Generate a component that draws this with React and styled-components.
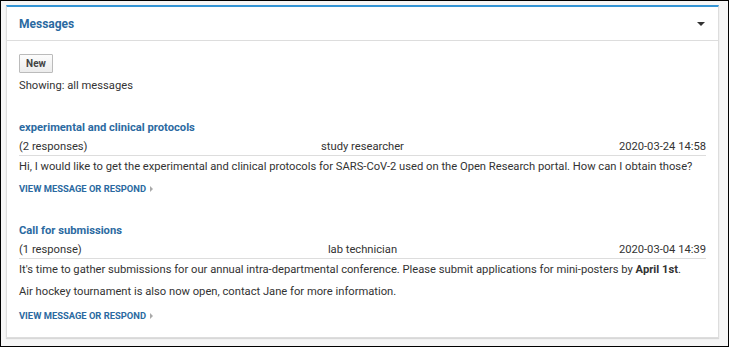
import styled, { createGlobalStyle } from "styled-components";

const GlobalStyle = createGlobalStyle`
  html, body {
    margin: 0;
    padding: 0;
    background: #000;
  }
  body {
    font-family: Roboto, "Liberation Sans", Arial, sans-serif;
    font-size: 11.2px;
    color: #333;
  }
  * {
    box-sizing: border-box;
  }
`;

const messages = [
  {
    id: 1,
    title: "experimental and clinical protocols",
    responses: "(2 responses)",
    author: "study researcher",
    date: "2020-03-24 14:58",
    body: [
      <>
        Hi, I would like to get the experimental and clinical protocols for
        SARS-CoV-2 used on the Open Research portal. How can I obtain those?
      </>,
    ],
  },
  {
    id: 2,
    title: "Call for submissions",
    responses: "(1 response)",
    author: "lab technician",
    date: "2020-03-04 14:39",
    body: [
      <>
        It's time to gather submissions for our annual intra-departmental
        conference. Please submit applications for mini-posters by{" "}
        <b>April 1st</b>.
      </>,
      <>Air hockey tournament is also now open, contact Jane for more information.</>,
    ],
  },
];

const Frame = styled.div`
  width: 729px;
  height: 347px;
  border: 1px solid #000;
  background: #f6f6f6;
  padding: 4px 9px 0 5px;
`;

const Panel = styled.section`
  background: #fff;
  border: 1px solid #ddd;
  border-top: 2px solid #3495d5;
  box-shadow: 0 1px 1px rgba(0, 0, 0, 0.12);
  height: 333px;
`;

const Header = styled.div`
  height: 34px;
  border-bottom: 1px solid #ddd;
  display: flex;
  align-items: center;
  justify-content: space-between;
  padding: 0 13px 0 12px;
`;

const HeaderTitle = styled.h3`
  margin: 0;
  font-size: 12px;
  font-weight: 700;
  color: #2b6aa1;
`;

const Caret = styled.span`
  width: 0;
  height: 0;
  border-left: 4px solid transparent;
  border-right: 4px solid transparent;
  border-top: 4px solid #333;
  margin-top: 1px;
`;

const Body = styled.div`
  padding: 13px 12px 0 12px;
`;

const NewButton = styled.button`
  font-family: inherit;
  font-size: 10px;
  font-weight: 700;
  color: #444;
  height: 19px;
  width: 34px;
  padding: 0;
  border: 1px solid #bbb;
  border-radius: 1px;
  background: linear-gradient(#fcfcfc, #ececec);
  display: block;
`;

const Showing = styled.div`
  line-height: 17px;
  margin-top: 4px;
`;

const Message = styled.div`
  margin-top: 25px;
`;

const Title = styled.div`
  font-weight: 700;
  color: #2b6aa1;
  line-height: 17px;
  margin-bottom: 2px;
`;

const InfoRow = styled.div`
  display: grid;
  grid-template-columns: 1fr auto 1fr;
  line-height: 17px;
  border-bottom: 1px solid #ddd;
`;

const Cell = styled.span`
  justify-self: ${(p) => p.$align || "start"};
`;

const Text = styled.p`
  margin: 2px 0 3px;
  line-height: 17px;
  & + & {
    margin-top: 5px;
    margin-bottom: 5px;
  }
`;

const ViewLink = styled.a`
  display: inline-flex;
  align-items: center;
  gap: 4px;
  margin-top: 2px;
  font-size: 9.4px;
  font-weight: 700;
  line-height: 17px;
  color: #2b6aa1;
  text-decoration: none;
  text-transform: uppercase;
`;

const Arrow = styled.span`
  width: 0;
  height: 0;
  border-top: 3px solid transparent;
  border-bottom: 3px solid transparent;
  border-left: 3px solid #aaa;
`;

export default function App() {
  return (
    <>
      <GlobalStyle />
      <Frame>
        <Panel>
          <Header>
            <HeaderTitle>Messages</HeaderTitle>
            <Caret />
          </Header>
          <Body>
            <NewButton>New</NewButton>
            <Showing>Showing: all messages</Showing>
            {messages.map((m) => (
              <Message key={m.id}>
                <Title>{m.title}</Title>
                <InfoRow>
                  <Cell>{m.responses}</Cell>
                  <Cell $align="center">{m.author}</Cell>
                  <Cell $align="end">{m.date}</Cell>
                </InfoRow>
                {m.body.map((b, i) => (
                  <Text key={i}>{b}</Text>
                ))}
                <ViewLink href="#">
                  View message or respond
                  <Arrow />
                </ViewLink>
              </Message>
            ))}
          </Body>
        </Panel>
      </Frame>
    </>
  );
}
